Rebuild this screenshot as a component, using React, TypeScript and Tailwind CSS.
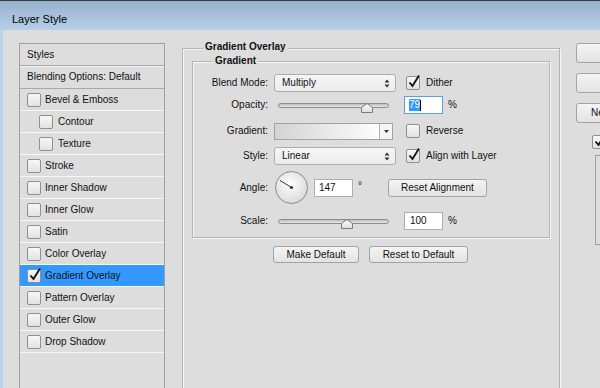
import React from "react";

function Check({ checked = false, className = "" }: { checked?: boolean; className?: string }) {
  return (
    <div
      className={
        "relative w-[14px] h-[14px] shrink-0 rounded-[2px] border border-[#8e8f8f] bg-linear-to-b from-[#f7f7f7] to-[#e2e2e2] " +
        className
      }
    >
      {checked && (
        <svg className="absolute -top-[3px] left-[0px] overflow-visible" width="14" height="15" viewBox="0 0 14 15">
          <path d="M2.5 8.5 L5.5 12 L12 1.5" stroke="#111" strokeWidth="1.9" fill="none" strokeLinejoin="miter" />
        </svg>
      )}
    </div>
  );
}

function UpDown() {
  return (
    <svg width="6" height="9" viewBox="0 0 6 9">
      <path d="M3 0.5 L5.5 3.5 L0.5 3.5 Z" fill="#333" />
      <path d="M3 8.5 L5.5 5.5 L0.5 5.5 Z" fill="#333" />
    </svg>
  );
}

function Select({ value }: { value: string }) {
  return (
    <div className="ml-[6px] w-[122px] h-[18px] shrink-0 rounded-[3px] border border-[#acacac] bg-linear-to-b from-[#f6f6f6] to-[#ececec] flex items-center pl-[7px] pr-[5px]">
      <span className="flex-1">{value}</span>
      <UpDown />
    </div>
  );
}

function Thumb() {
  return (
    <svg width="12" height="10" viewBox="0 0 12 10">
      <defs>
        <linearGradient id="tg" x1="0" y1="0" x2="0" y2="1">
          <stop offset="0" stopColor="#ffffff" />
          <stop offset="1" stopColor="#dcdcdc" />
        </linearGradient>
      </defs>
      <path d="M0.5 9.5 L0.5 4.5 L6 0.5 L11.5 4.5 L11.5 9.5 Z" fill="url(#tg)" stroke="#7a7a7a" strokeWidth="1" />
    </svg>
  );
}

function Slider({ pos }: { pos: number }) {
  return (
    <div className="ml-[6px] w-[122px] h-[18px] shrink-0 flex items-center">
      <div className="relative ml-[4px] w-[111px] h-[5px] rounded-full border border-[#8c8c8c] bg-linear-to-b from-[#bcbcbc] to-[#e8e8e8]">
        <div className="absolute top-[-1px]" style={{ left: pos }}>
          <Thumb />
        </div>
      </div>
    </div>
  );
}

function Button({ children, className = "" }: { children: React.ReactNode; className?: string }) {
  return (
    <div
      className={
        "shrink-0 flex items-center rounded-[3px] border border-[#a3a3a3] bg-linear-to-b from-[#f4f4f4] to-[#e3e3e3] " +
        className
      }
    >
      {children}
    </div>
  );
}

function Label({ children }: { children: React.ReactNode }) {
  return <div className="w-[75px] shrink-0 text-right">{children}</div>;
}

const rows: { label: string; indent?: boolean; checked?: boolean; active?: boolean }[] = [
  { label: "Bevel & Emboss" },
  { label: "Contour", indent: true },
  { label: "Texture", indent: true },
  { label: "Stroke" },
  { label: "Inner Shadow" },
  { label: "Inner Glow" },
  { label: "Satin" },
  { label: "Color Overlay" },
  { label: "Gradient Overlay", checked: true, active: true },
  { label: "Pattern Overlay" },
  { label: "Outer Glow" },
  { label: "Drop Shadow" },
];

export default function App() {
  return (
    <div className="w-[600px] h-[388px] overflow-hidden bg-[#dddddd] font-['Liberation_Sans',Arial,sans-serif] text-[10px] leading-[12px] text-[#111]">
      {/* Title bar */}
      <div className="h-[30px] border-t border-[#3a3a3a] bg-linear-to-b from-[#97b2ce] to-[#b8cfe8] flex items-center pl-[12px] pt-[7px] text-[11px] text-black">
        Layer Style
      </div>

      <div className="flex h-[358px] border-l-[3px] border-[#b9d1ea]">
        {/* Left styles panel */}
        <div className="ml-[16px] mt-[13px] w-[146px] h-[400px] shrink-0 border border-[#a0a0a0]">
          <div className="h-[22px] flex items-center pl-[7px] border-b border-[#a8a8a8]">Styles</div>
          <div className="h-[23px] flex items-center pl-[7px] border-b border-[#a8a8a8] shadow-[inset_0_1px_0_#f4f4f4]">
            Blending Options: Default
          </div>
          {rows.map((r) => (
            <div
              key={r.label}
              className={
                "h-[22px] flex items-center border-b border-[#f7f7f7] " +
                (r.indent ? "pl-[19px] " : "pl-[7px] ") +
                (r.active ? "bg-[#3399ff]" : "")
              }
            >
              <Check checked={r.checked} />
              <span className={r.indent ? "ml-[5px]" : "ml-[4px]"}>{r.label}</span>
            </div>
          ))}
        </div>

        {/* Gradient Overlay group */}
        <div className="ml-[17px] mt-[18px] w-[378px] h-[400px] shrink-0 border border-[#b4b4b4] shadow-[inset_1px_1px_0_#f6f6f6,1px_1px_0_#f6f6f6] pl-[9px] pr-[9px]">
          <div className="-mt-[8px] ml-[11px] px-[2px] w-fit bg-[#dddddd] font-bold">Gradient Overlay</div>

          <div className="mt-[8px] border border-[#b4b4b4] shadow-[inset_1px_1px_0_#f6f6f6,1px_1px_0_#f6f6f6] pb-[7px]">
            <div className="-mt-[7px] ml-[20px] px-[2px] w-fit bg-[#dddddd] font-bold">Gradient</div>

            {/* Blend Mode */}
            <div className="mt-[7px] h-[18px] flex items-center">
              <Label>Blend Mode:</Label>
              <Select value="Multiply" />
              <Check checked className="ml-[10px]" />
              <span className="ml-[6px]">Dither</span>
            </div>

            {/* Opacity */}
            <div className="mt-[4px] h-[18px] flex items-center">
              <Label>Opacity:</Label>
              <Slider pos={82} />
              <div className="ml-[8px] w-[39px] h-[18px] shrink-0 bg-white border border-[#5a9ee8] flex items-center pl-[4px]">
                <span className="bg-[#3399ff] text-white">79</span>
                <span className="w-px h-[11px] bg-black" />
              </div>
              <span className="ml-[5px]">%</span>
            </div>

            {/* Gradient */}
            <div className="mt-[8px] h-[18px] flex items-center">
              <Label>Gradient:</Label>
              <div className="ml-[6px] w-[119px] h-[17px] shrink-0 border border-[#a3a3a3] flex">
                <div className="flex-1 bg-linear-to-r from-[#d3d3d3] to-[#fdfdfd]" />
                <div className="w-[13px] border-l border-[#b0b0b0] bg-[#f4f4f4] flex items-center justify-center">
                  <svg width="5" height="3" viewBox="0 0 5 3">
                    <path d="M0 0 L5 0 L2.5 3 Z" fill="#333" />
                  </svg>
                </div>
              </div>
              <Check className="ml-[13px]" />
              <span className="ml-[6px]">Reverse</span>
            </div>

            {/* Style */}
            <div className="mt-[7px] h-[18px] flex items-center">
              <Label>Style:</Label>
              <Select value="Linear" />
              <Check checked className="ml-[10px]" />
              <span className="ml-[6px]">Align with Layer</span>
            </div>

            {/* Angle */}
            <div className="mt-[6px] h-[33px] flex items-center">
              <Label>Angle:</Label>
              <svg className="ml-[7px] shrink-0" width="33" height="33" viewBox="0 0 33 33">
                <defs>
                  <radialGradient id="dg" cx="0.45" cy="0.4" r="0.6">
                    <stop offset="0" stopColor="#ffffff" />
                    <stop offset="1" stopColor="#dadada" />
                  </radialGradient>
                </defs>
                <circle cx="16.5" cy="16.5" r="16" fill="url(#dg)" stroke="#8a8a8a" strokeWidth="1" />
                <line x1="16.5" y1="16.5" x2="5" y2="9.5" stroke="#333" strokeWidth="1" />
                <circle cx="16.5" cy="16.5" r="1.6" fill="#333" />
              </svg>
              <div className="ml-[6px] w-[39px] h-[18px] shrink-0 bg-white border border-[#abadb3] flex items-center pl-[4px]">
                147
              </div>
              <span className="w-[35px] shrink-0 pl-[5px] -mt-[4px]">°</span>
              <Button className="w-[99px] h-[18px] justify-center">Reset Alignment</Button>
            </div>

            {/* Scale */}
            <div className="mt-[8px] h-[18px] flex items-center">
              <Label>Scale:</Label>
              <Slider pos={62} />
              <div className="ml-[8px] w-[39px] h-[18px] shrink-0 bg-white border border-[#abadb3] flex items-center pl-[5px]">
                100
              </div>
              <span className="ml-[5px]">%</span>
            </div>
          </div>

          <div className="mt-[8px] flex">
            <Button className="ml-[81px] w-[86px] h-[17px] justify-center">Make Default</Button>
            <Button className="ml-[10px] w-[99px] h-[17px] justify-center">Reset to Default</Button>
          </div>
        </div>

        {/* Right column */}
        <div className="ml-[16px] mt-[13px] w-[80px] shrink-0 flex flex-col">
          <Button className="w-[80px] h-[20px] border-[#5e5e5e] pl-[33px]">OK</Button>
          <Button className="mt-[10px] w-[80px] h-[20px] pl-[24px]">Cancel</Button>
          <Button className="mt-[10px] w-[80px] h-[20px] pl-[14px]">New Style...</Button>
          <div className="mt-[12px] ml-[16px] flex items-center">
            <Check checked />
            <span className="ml-[5px]">Preview</span>
          </div>
          <div className="mt-[6px] ml-[19px] w-[60px] h-[90px] border border-[#a0a0a0]" />
        </div>
      </div>
    </div>
  );
}
